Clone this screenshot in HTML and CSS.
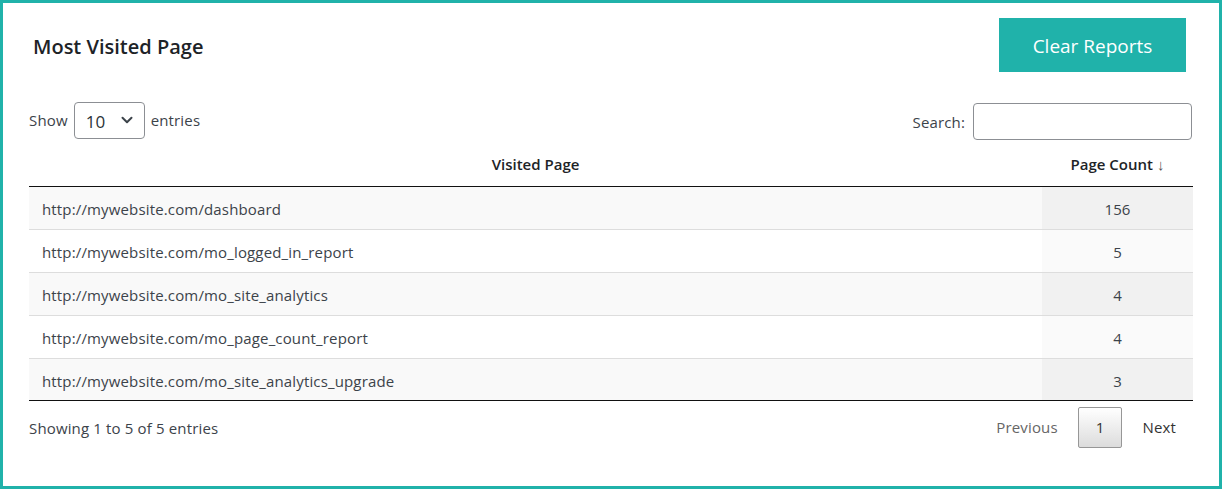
FILE: index.html
```html
<!DOCTYPE html>
<html lang="en">
<head>
  <meta charset="UTF-8" />
  <meta name="viewport" content="width=device-width, initial-scale=1.0"/>
  <title>Most Visited Page</title>
  <link rel="stylesheet" href="styles.css">
</head>
<body>
  <div class="report-box">
    <div class="report-head">
      <h2>Most Visited Page</h2>
      <button type="button" class="clear-btn">Clear Reports</button>
    </div>

    <div class="table-controls">
      <label class="length">
        Show
        <span class="select-box">
          <span class="select-value">10</span>
          <svg width="14" height="14" viewBox="0 0 14 14"><path d="M2.5 4.8 L7 9.2 L11.5 4.8" fill="none" stroke="#3c434a" stroke-width="2" stroke-linecap="round" stroke-linejoin="round"/></svg>
        </span>
        entries
      </label>
      <label class="search">
        Search:
        <input type="text" />
      </label>
    </div>

    <table class="report-table">
      <thead>
        <tr>
          <th>Visited Page</th>
          <th class="count-col">Page Count <span class="sort-arrow">&#8595;</span></th>
        </tr>
      </thead>
      <tbody>
        <tr class="odd">
          <td>http://mywebsite.com/dashboard</td>
          <td class="count">156</td>
        </tr>
        <tr class="even">
          <td>http://mywebsite.com/mo_logged_in_report</td>
          <td class="count">5</td>
        </tr>
        <tr class="odd">
          <td>http://mywebsite.com/mo_site_analytics</td>
          <td class="count">4</td>
        </tr>
        <tr class="even">
          <td>http://mywebsite.com/mo_page_count_report</td>
          <td class="count">4</td>
        </tr>
        <tr class="odd">
          <td>http://mywebsite.com/mo_site_analytics_upgrade</td>
          <td class="count">3</td>
        </tr>
      </tbody>
    </table>

    <div class="table-footer">
      <div class="info">Showing 1 to 5 of 5 entries</div>
      <div class="paginate">
        <span class="page-btn disabled">Previous</span>
        <span class="page-btn current">1</span>
        <span class="page-btn">Next</span>
      </div>
    </div>
  </div>
</body>
</html>
```

FILE: styles.css
```css
* {
  box-sizing: border-box;
}

body {
  margin: 0;
  font-family: 'Segoe UI', 'Open Sans', 'Noto Sans', sans-serif;
  font-size: 15px;
  letter-spacing: 0.15px;
  color: #3c434a;
  background: #ffffff;
}

.report-box {
  height: 489px;
  border: 3px solid #20b2aa;
  padding: 15px 26px 0 26px;
}

.report-head {
  display: flex;
  justify-content: space-between;
  align-items: center;
}

.report-head h2 {
  margin: 2px 0 0 4px;
  font-size: 20px;
  font-weight: 600;
  letter-spacing: 0;
  color: #1d2327;
}

.clear-btn {
  width: 187px;
  height: 54px;
  margin-right: 7px;
  padding-top: 2px;
  background-color: #20b2aa;
  color: #ffffff;
  border: none;
  font-family: inherit;
  font-size: 19px;
  cursor: pointer;
}

.table-controls {
  display: flex;
  justify-content: space-between;
  align-items: center;
  margin-top: 31px;
  height: 37px;
}

.length {
  display: flex;
  align-items: center;
  gap: 6px;
  margin-top: -3px;
}

.select-box {
  display: flex;
  align-items: center;
  justify-content: space-between;
  width: 71px;
  height: 37px;
  padding: 0 10px 0 11px;
  border: 1px solid #8c8f94;
  border-radius: 4px;
  font-size: 17px;
  color: #2c3338;
}

.select-value {
  padding-top: 2px;
}

.search {
  display: flex;
  align-items: center;
  gap: 8px;
  margin-right: 1px;
}

.search input {
  width: 219px;
  height: 37px;
  border: 1px solid #8c8f94;
  border-radius: 4px;
  padding: 0 8px;
  font-family: inherit;
  font-size: 15px;
}

.report-table {
  width: 100%;
  margin-top: 2px;
  border-collapse: separate;
  border-spacing: 0;
}

.report-table th {
  height: 45px;
  padding: 0 18px;
  font-weight: 600;
  letter-spacing: 0;
  color: #1d2327;
  line-height: 20px;
  text-align: center;
  border-bottom: 1px solid #111111;
}

.report-table th.count-col {
  width: 151px;
  white-space: nowrap;
}

.sort-arrow {
  font-weight: 400;
  color: #555555;
}

.report-table td {
  height: 43px;
  padding: 2px 13px 0 13px;
  line-height: 20px;
  border-top: 1px solid #dddddd;
}

.report-table tbody tr:first-child td {
  border-top: none;
  height: 42px;
}

.report-table tbody tr:last-child td {
  border-bottom: 1px solid #111111;
}

.report-table tr.odd td {
  background: #f9f9f9;
}

.report-table tr.odd td.count {
  background: #f1f1f1;
}

.report-table tr.even td.count {
  background: #fafafa;
}

.report-table td.count {
  text-align: center;
}

.table-footer {
  display: flex;
  justify-content: space-between;
  align-items: center;
  padding-top: 5px;
}

.info {
  padding-top: 1px;
}

.paginate {
  display: flex;
  align-items: center;
  padding-top: 1px;
  margin-right: -1px;
}

.page-btn {
  display: inline-block;
  padding: 8px 17px;
  margin-left: 2px;
  line-height: 23px;
  border: 1px solid transparent;
  border-radius: 2px;
  color: #333333;
  cursor: pointer;
}

.page-btn.disabled {
  color: #666666;
  cursor: default;
}

.page-btn.current {
  padding: 8px 17px;
  border-color: #979797;
  background: linear-gradient(to bottom, #ffffff 0%, #dcdcdc 100%);
}
```
